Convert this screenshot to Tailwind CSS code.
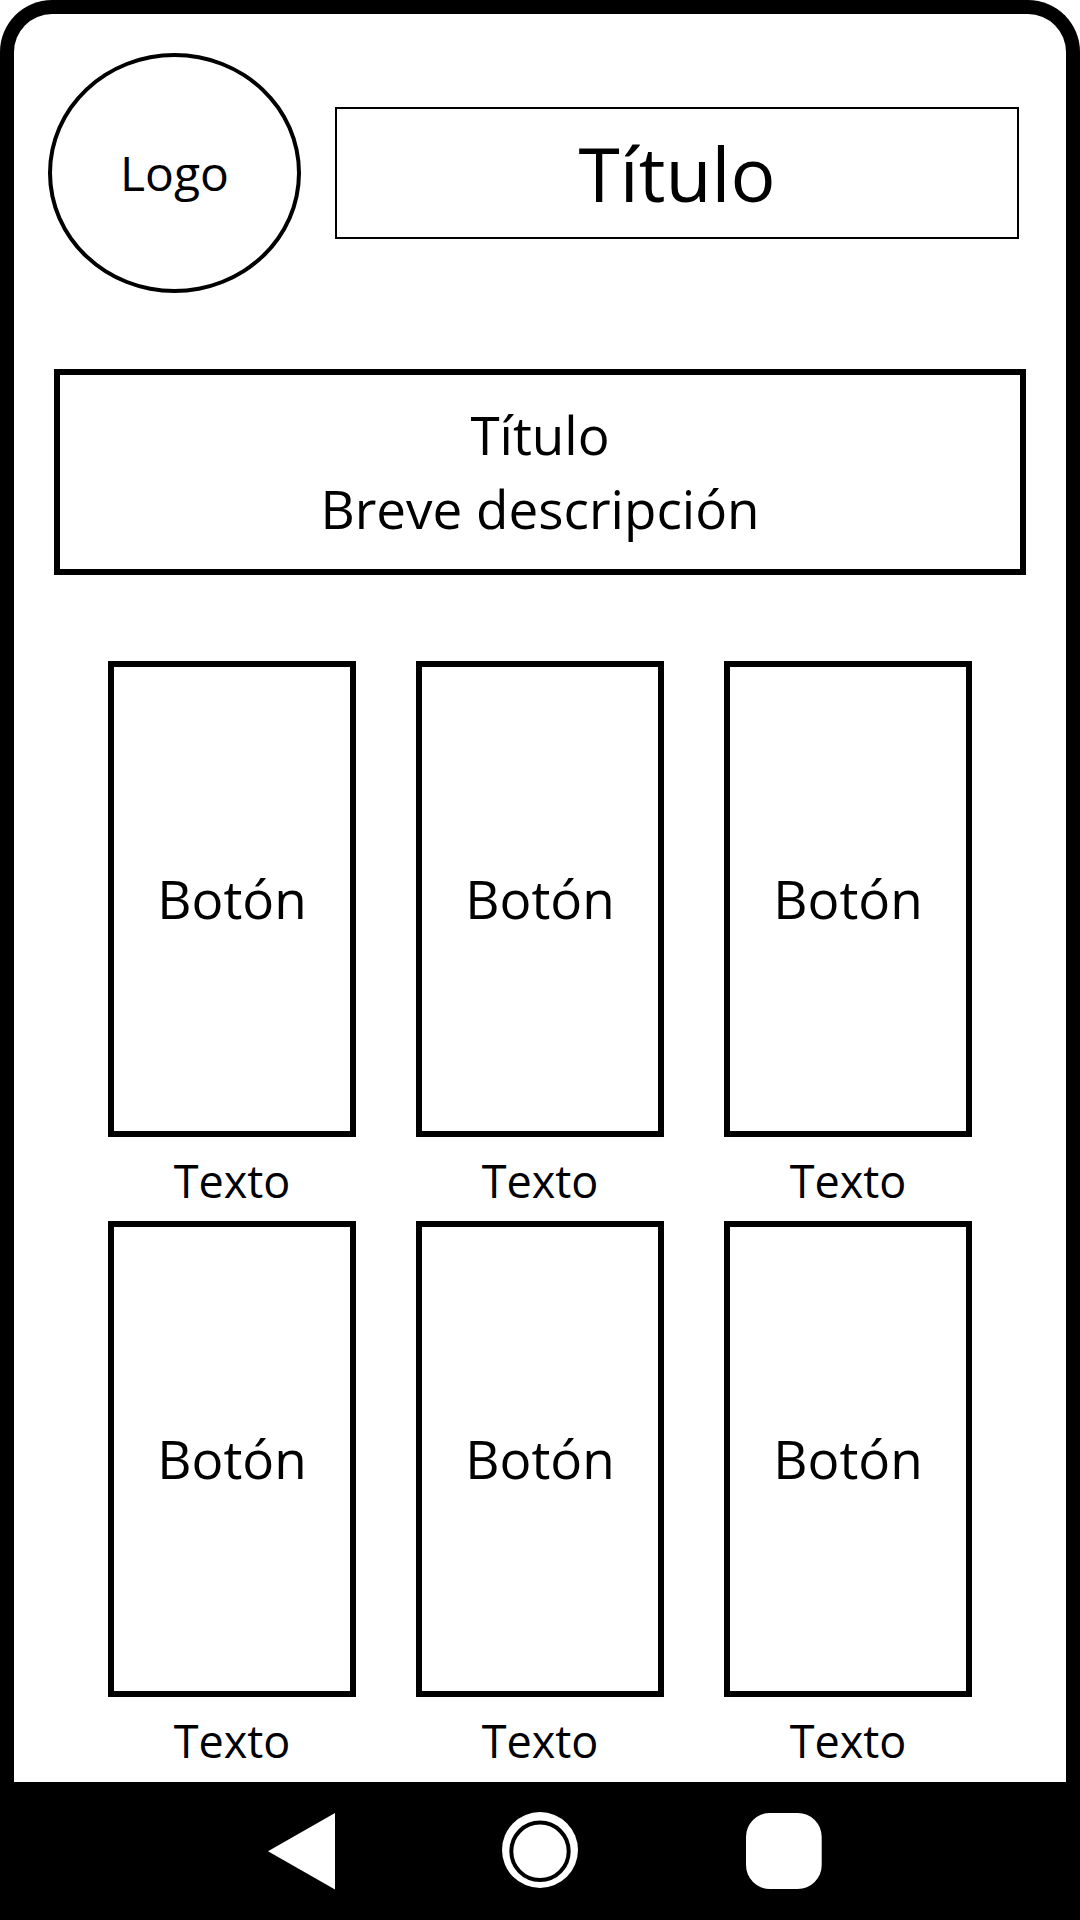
<!DOCTYPE html>
<html lang="es">
<head>
<meta charset="utf-8">
<meta name="viewport" content="width=device-width, initial-scale=1">
<title>Título</title>
<script src="https://cdn.jsdelivr.net/npm/@tailwindcss/browser@4"></script>
</head>
<body class="bg-white font-['Open_Sans',sans-serif] text-black">
<div class="flex min-h-screen flex-col">
  <div class="flex flex-1 flex-col rounded-t-[52px] border-x-[14px] border-t-[14px] border-black bg-white">
    <header class="flex items-center gap-[34px] pt-[39px] pr-[47px] pl-[34px]">
      <a href="#" class="flex h-60 w-[253px] shrink-0 items-center justify-center rounded-[50%] border-4 border-black text-[48px]">Logo</a>
      <h1 class="flex h-[132px] flex-1 items-center justify-center border-2 border-black text-[75px] leading-none">Título</h1>
    </header>
    <main>
      <section class="mx-10 mt-[76px] flex h-[206px] flex-col justify-center border-[6px] border-black text-center text-[53px] leading-[74px]">
        <h2>Título</h2>
        <p>Breve descripción</p>
      </section>
      <section class="mx-[94px] mt-[86px] grid grid-cols-3 gap-x-[60px]">
        <div>
          <button type="button" aria-describedby="t1" class="block h-[476px] w-full border-[6px] border-black text-[53px]">Botón</button>
          <p id="t1" class="pt-1 text-center text-[45px] leading-[80px]">Texto</p>
        </div>
        <div>
          <button type="button" aria-describedby="t2" class="block h-[476px] w-full border-[6px] border-black text-[53px]">Botón</button>
          <p id="t2" class="pt-1 text-center text-[45px] leading-[80px]">Texto</p>
        </div>
        <div>
          <button type="button" aria-describedby="t3" class="block h-[476px] w-full border-[6px] border-black text-[53px]">Botón</button>
          <p id="t3" class="pt-1 text-center text-[45px] leading-[80px]">Texto</p>
        </div>
        <div>
          <button type="button" aria-describedby="t4" class="block h-[476px] w-full border-[6px] border-black text-[53px]">Botón</button>
          <p id="t4" class="pt-1 text-center text-[45px] leading-[80px]">Texto</p>
        </div>
        <div>
          <button type="button" aria-describedby="t5" class="block h-[476px] w-full border-[6px] border-black text-[53px]">Botón</button>
          <p id="t5" class="pt-1 text-center text-[45px] leading-[80px]">Texto</p>
        </div>
        <div>
          <button type="button" aria-describedby="t6" class="block h-[476px] w-full border-[6px] border-black text-[53px]">Botón</button>
          <p id="t6" class="pt-1 text-center text-[45px] leading-[80px]">Texto</p>
        </div>
      </section>
    </main>
  </div>
  <nav class="flex justify-center gap-[168px] bg-black pt-[30px] pb-8">
    <button type="button" aria-label="Atrás">
      <svg class="block h-[76px] w-[76px] overflow-visible" viewBox="0 0 76 76" fill="white"><path d="M10 39.2 77 1v76.500z"/></svg>
    </button>
    <button type="button" aria-label="Inicio">
      <svg class="block h-[76px] w-[76px]" viewBox="0 0 76 76"><circle cx="38" cy="38" r="38" fill="white"/><circle cx="38" cy="39.300" r="28.700" fill="none" stroke="black" stroke-width="4"/></svg>
    </button>
    <button type="button" aria-label="Recientes">
      <svg class="block h-[76px] w-[76px] overflow-visible" viewBox="0 0 76 76" fill="white"><rect y="1" width="75.700" height="76" rx="24"/></svg>
    </button>
  </nav>
</div>
</body>
</html>
